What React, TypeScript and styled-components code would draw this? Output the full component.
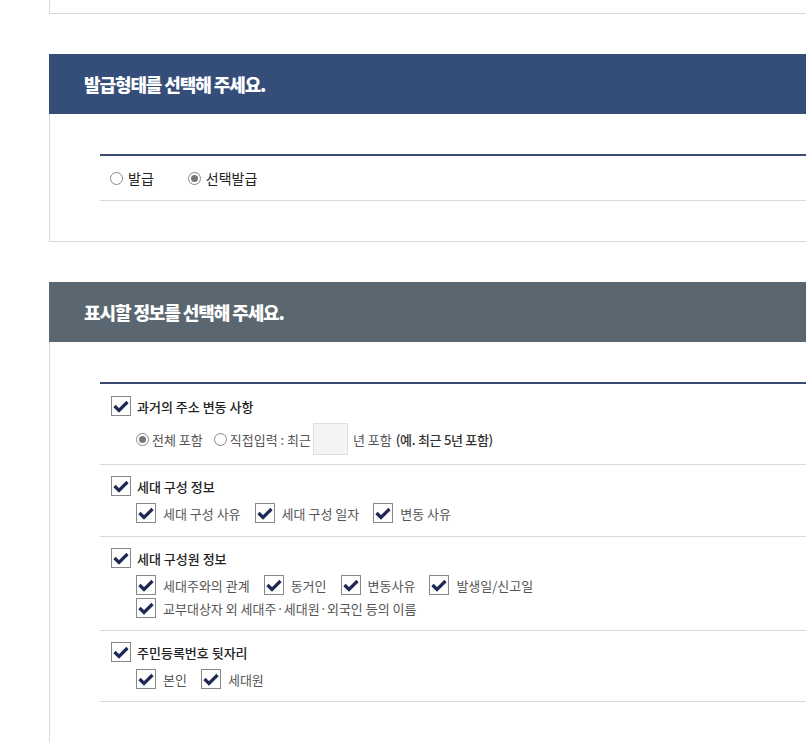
import styled, { createGlobalStyle } from "styled-components";

const GlobalStyle = createGlobalStyle`
	html, body {
		margin: 0;
		padding: 0;
		background: #fff;
		overflow-x: hidden;
	}
	body {
		font-family: "Noto Sans CJK KR", "Noto Sans", sans-serif;
		color: #333;
	}
`;

const Page = styled.div`
	padding-left: 49px;
	width: 900px;
`;

const TopStub = styled.div`
	height: 13px;
	border-left: 1px solid #d9d9d9;
	border-bottom: 1px solid #d9d9d9;
	margin-bottom: 40px;
`;

const Panel = styled.section`
	margin-bottom: 40px;
`;

const PanelHeader = styled.h2<{ $tone: "navy" | "slate" }>`
	margin: 0;
	height: 60px;
	display: flex;
	align-items: center;
	padding-left: 35px;
	background: ${({ $tone }) => ($tone === "navy" ? "#344d79" : "#5a6770")};
	color: #fff;
	font-size: 18px;
	font-weight: 900;
	letter-spacing: -1.1px;
`;

const PanelBody = styled.div`
	border-left: 1px solid #d9d9d9;
	border-bottom: 1px solid #d9d9d9;
	padding: 40px 0 40px 50px;
`;

const Table = styled.div`
	border-top: 2px solid #3a4a72;
`;

const Row = styled.div<{ $pad?: string }>`
	border-bottom: 1px solid #d9d9d9;
	padding: ${({ $pad }) => $pad || "11px 0 12px 11px"};
	display: flex;
	flex-direction: column;
	gap: 7px;
`;

const Line = styled.div<{ $indent?: boolean; $gap?: number }>`
	display: flex;
	align-items: center;
	gap: ${({ $gap }) => $gap ?? 14}px;
	padding-left: ${({ $indent }) => ($indent ? "25px" : "0")};
	min-height: 20px;
`;

const Sub = styled.div`
	display: flex;
	flex-direction: column;
	gap: 3px;
`;

const Label = styled.label<{ $strong?: boolean }>`
	display: inline-flex;
	align-items: center;
	gap: ${({ $strong }) => ($strong ? 6 : 7)}px;
	font-size: 13px;
	font-weight: ${({ $strong }) => ($strong ? 500 : 400)};
	color: ${({ $strong }) => ($strong ? "#222" : "#555")};
	white-space: nowrap;
`;

const Box = styled.span`
	width: 18px;
	height: 18px;
	border: 1px solid #888;
	background: #fff;
	display: inline-flex;
	align-items: center;
	justify-content: center;
	flex-shrink: 0;
`;

const Radio = styled.span<{ $on?: boolean }>`
	width: 11px;
	height: 11px;
	border-radius: 50%;
	border: 1px solid #888;
	background: #fff;
	display: inline-flex;
	align-items: center;
	justify-content: center;
	flex-shrink: 0;
	&::after {
		content: "";
		width: 7px;
		height: 7px;
		border-radius: 50%;
		background: ${({ $on }) => ($on ? "#777" : "transparent")};
	}
`;

const RadioLabel = styled.label<{ $size?: number; $dark?: boolean }>`
	display: inline-flex;
	align-items: center;
	gap: ${({ $size }) => ($size === 14 ? 5 : 3)}px;
	font-size: ${({ $size }) => $size ?? 13}px;
	color: ${({ $dark }) => ($dark ? "#222" : "#555")};
	white-space: nowrap;
`;

const YearInput = styled.span`
	width: 33px;
	height: 30px;
	background: #f4f4f4;
	border: 1px solid #e0e0e0;
	margin: 0 5px 0 2px;
`;

const Hint = styled.b`
	font-weight: 500;
	color: #333;
	margin-left: 4px;
	letter-spacing: -0.3px;
`;

const Inline = styled.span`
	display: inline-flex;
	align-items: center;
	font-size: 13px;
	color: #555;
	white-space: nowrap;
`;

const Check = () => (
	<Box>
		<svg width="16" height="13" viewBox="0 0 16 13">
			<path d="M1.5 6 L6 10.5 L14.5 2" fill="none" stroke="#1f2957" strokeWidth="3.2" />
		</svg>
	</Box>
);

const CheckItem = ({ children, strong }: { children: React.ReactNode; strong?: boolean }) => (
	<Label $strong={strong}>
		<Check />
		{children}
	</Label>
);

export default function App() {
	return (
		<>
			<GlobalStyle />
			<Page>
				<TopStub />
				<Panel>
					<PanelHeader $tone="navy">발급형태를 선택해 주세요.</PanelHeader>
					<PanelBody>
						<Table>
							<Row $pad="12px 0 12px 10px">
								<Line $gap={34}>
									<RadioLabel $size={14} $dark>
										<Radio />
										발급
									</RadioLabel>
									<RadioLabel $size={14} $dark>
										<Radio $on />
										선택발급
									</RadioLabel>
								</Line>
							</Row>
						</Table>
					</PanelBody>
				</Panel>
				<Panel>
					<PanelHeader $tone="slate">표시할 정보를 선택해 주세요.</PanelHeader>
					<PanelBody>
						<Table>
							<Row $pad="12px 0 9px 11px">
								<Line>
									<CheckItem strong>과거의 주소 변동 사항</CheckItem>
								</Line>
								<Line $indent $gap={11}>
									<RadioLabel>
										<Radio $on />
										전체 포함
									</RadioLabel>
									<Inline>
										<RadioLabel>
											<Radio />
											직접입력 : 최근
										</RadioLabel>
										<YearInput />
										년 포함
										<Hint>(예. 최근 5년 포함)</Hint>
									</Inline>
								</Line>
							</Row>
							<Row $pad="11px 0 13px 11px">
								<Line>
									<CheckItem strong>세대 구성 정보</CheckItem>
								</Line>
								<Line $indent>
									<CheckItem>세대 구성 사유</CheckItem>
									<CheckItem>세대 구성 일자</CheckItem>
									<CheckItem>변동 사유</CheckItem>
								</Line>
							</Row>
							<Row>
								<Line>
									<CheckItem strong>세대 구성원 정보</CheckItem>
								</Line>
								<Sub>
									<Line $indent>
										<CheckItem>세대주와의 관계</CheckItem>
										<CheckItem>동거인</CheckItem>
										<CheckItem>변동사유</CheckItem>
										<CheckItem>발생일/신고일</CheckItem>
									</Line>
									<Line $indent>
										<CheckItem>교부대상자 외 세대주·세대원·외국인 등의 이름</CheckItem>
									</Line>
								</Sub>
							</Row>
							<Row>
								<Line>
									<CheckItem strong>주민등록번호 뒷자리</CheckItem>
								</Line>
								<Line $indent>
									<CheckItem>본인</CheckItem>
									<CheckItem>세대원</CheckItem>
								</Line>
							</Row>
						</Table>
					</PanelBody>
				</Panel>
			</Page>
		</>
	);
}
